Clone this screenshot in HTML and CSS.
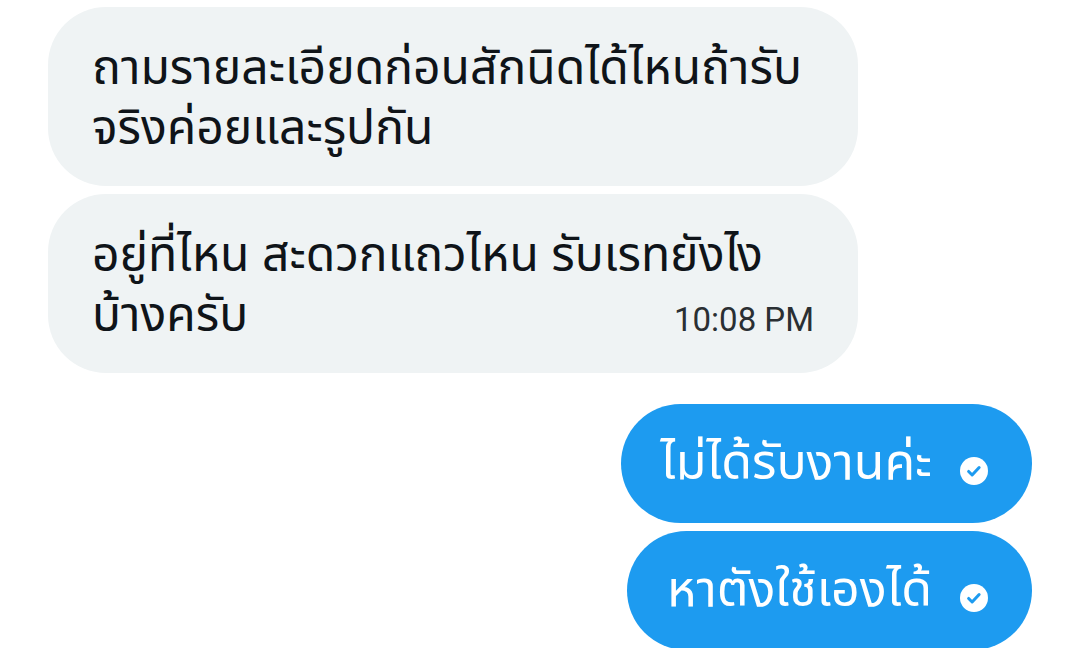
FILE: index.html
```html
<!DOCTYPE html>
<html lang="th">
<head>
    <meta charset="UTF-8">
    <meta name="viewport" content="width=device-width, initial-scale=1.0">
    <title>Chat</title>
    <link rel="stylesheet" href="styles.css">
</head>
<body>
    <div class="thread">
        <div class="msg in">
            <p class="text">ถามรายละเอียดก่อนสักนิดได้ไหนถ้ารับ<br>จริงค่อยและรูปกัน</p>
        </div>
        <div class="msg in">
            <p class="text">อยู่ที่ไหน สะดวกแถวไหน รับเรทยังไง</p>
            <div class="last-line">
                <span class="text">บ้างครับ</span>
                <span class="time">10:08 PM</span>
            </div>
        </div>

        <div class="msg out first">
            <span class="text">ไม่ได้รับงานค่ะ</span>
            <svg class="seen" viewBox="0 0 24 24" width="28" height="28">
                <circle cx="12" cy="12" r="12" fill="#fff"/>
                <path d="M7.4 12.4l3 3 6-6.4" fill="none" stroke="#1d9bf0" stroke-width="2.6" stroke-linecap="round" stroke-linejoin="round"/>
            </svg>
        </div>
        <div class="msg out">
            <span class="text">หาตังใช้เองได้</span>
            <svg class="seen" viewBox="0 0 24 24" width="28" height="28">
                <circle cx="12" cy="12" r="12" fill="#fff"/>
                <path d="M7.4 12.4l3 3 6-6.4" fill="none" stroke="#1d9bf0" stroke-width="2.6" stroke-linecap="round" stroke-linejoin="round"/>
            </svg>
        </div>
    </div>
</body>
</html>
```

FILE: styles.css
```css
body {
    margin: 0;
    background: #fff;
    font-family: "Noto Sans Thai", "Noto Sans", "DejaVu Sans", sans-serif;
    color: #0f1419;
}
.thread {
    display: flex;
    flex-direction: column;
    gap: 8px;
    padding: 7px 48px 0 48px;
}
.msg {
    box-sizing: border-box;
    border-radius: 58px;
}
.msg.in {
    width: 810px;
    height: 179px;
    padding: 33px 44px 0 44px;
    background: #eff3f4;
}
.text {
    margin: 0;
    font-size: 48px;
    line-height: 60px;
}
.last-line {
    display: flex;
    justify-content: space-between;
    align-items: baseline;
}
.time {
    font-family: Roboto, "Liberation Sans", sans-serif;
    font-size: 33px;
    color: #2a2f33;
}
.msg.out {
    align-self: flex-end;
    display: flex;
    align-items: center;
    gap: 28px;
    height: 119px;
    padding: 0 44px 0 40px;
    border-radius: 60px;
    background: #1d9bf0;
    color: #fff;
}
.msg.out .text {
    font-size: 50px;
}
.msg.out.first {
    margin-top: 23px;
}
.seen {
    flex: none;
    margin-top: 14px;
}
```
